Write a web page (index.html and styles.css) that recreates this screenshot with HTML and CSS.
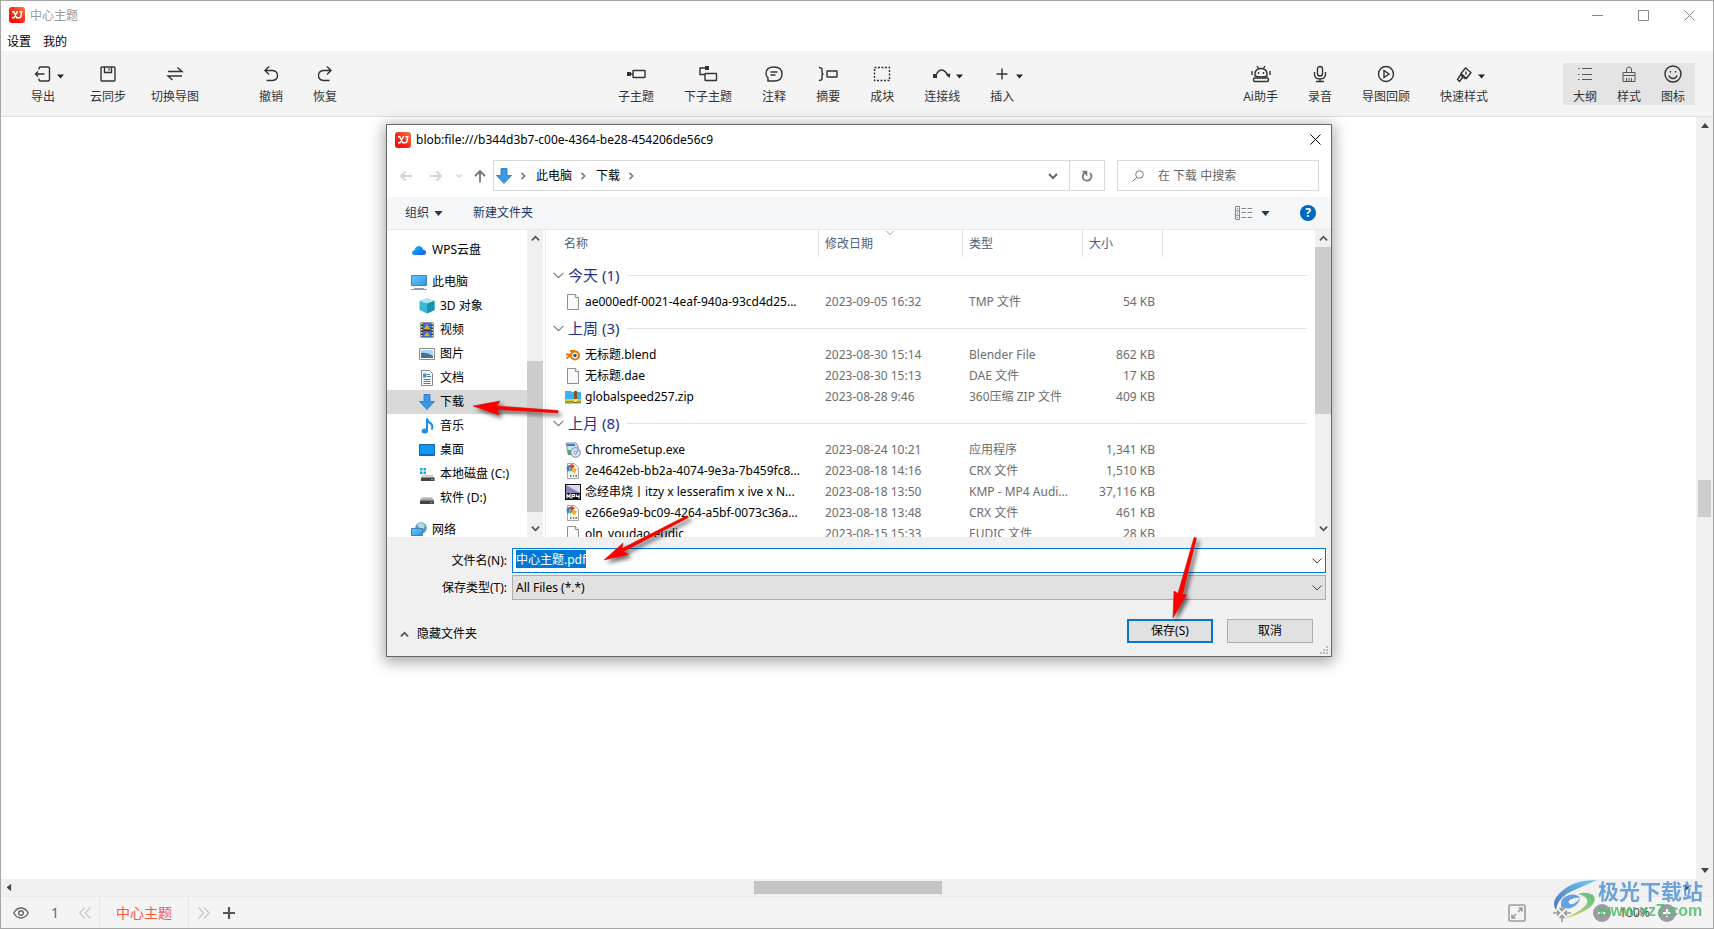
FILE: index.html
```html
<!DOCTYPE html>
<html lang="zh-CN">
<head>
<meta charset="utf-8">
<title>中心主题</title>
<link rel="stylesheet" href="styles.css">
</head>
<body>
<svg class="defs" aria-hidden="true">
  <defs>
    <linearGradient id="gLogo" x1="0" y1="1" x2="1" y2="0"><stop offset="0" stop-color="#f00"/><stop offset=".5" stop-color="#f3301c"/><stop offset="1" stop-color="#f47a45"/></linearGradient>
    <linearGradient id="gScreen" x1="0" y1="0" x2="1" y2="1"><stop offset="0" stop-color="#6cc8fb"/><stop offset="1" stop-color="#2a96ea"/></linearGradient>
    <linearGradient id="gCloud" x1="0" y1="0" x2="1" y2="1"><stop offset="0" stop-color="#1fd0e0"/><stop offset=".5" stop-color="#1687f5"/><stop offset="1" stop-color="#1a5cf0"/></linearGradient>
    <linearGradient id="gDisk" x1="0" y1="0" x2="0" y2="1"><stop offset="0" stop-color="#d8d8d8"/><stop offset="1" stop-color="#8f8f8f"/></linearGradient>
    <linearGradient id="gSwirl" x1="0" y1="1" x2="1" y2="0"><stop offset="0" stop-color="#2e62b8"/><stop offset="1" stop-color="#5cc4ee"/></linearGradient>
    <linearGradient id="gLeaf" x1="0" y1="1" x2="1" y2="0"><stop offset="0" stop-color="#e9d85a"/><stop offset="1" stop-color="#3fb56c"/></linearGradient>
    <filter id="soft" x="-30%" y="-50%" width="160%" height="200%"><feDropShadow dx="3" dy="3" stdDeviation="2" flood-color="#000" flood-opacity=".6"/></filter>
  </defs>
  <symbol id="logo" viewBox="0 0 16 16"><rect width="16" height="16" rx="3" fill="url(#gLogo)"/><path d="M3 4.800h1.800l3 6h2.400q1.600 0 1.800-1.600l.6-4.400h-2.200M8.600 4.200L5 10.800H3" fill="none" stroke="#fff" stroke-width="1.500"/></symbol>
  <symbol id="dl" viewBox="0 0 16 16"><path d="M5 .5h6v7h4.500L8 15.500.5 7.500H5z" fill="#3b96e6" stroke="#2277c8" stroke-width=".8"/></symbol>
  <symbol id="file" viewBox="0 0 16 16"><path d="M2.500.5h8l3 3v12h-11z" fill="#f9f9f9" stroke="#8e8e8e"/><path d="M10.500.5v3h3" fill="#fff" stroke="#8e8e8e"/></symbol>
  <symbol id="crx" viewBox="0 0 16 16"><path d="M2.500.5h7l4 4v11h-11z" fill="#f7f7f7" stroke="#a5a5a5"/><path d="M3 3l4-2 3 2-3 3z" fill="#e33b2e"/><path d="M1.500 4l3-2v5l-2 2z" fill="#2f78d0"/><path d="M4 9l2-5 2 3z" fill="#36a64a"/><path d="M8 5l4 1-2 4-3-1z" fill="#f5b31d"/><path d="M5 13h1.500M8 13h1.200M10.500 13H12" stroke="#777" stroke-width="2"/></symbol>
  <symbol id="chev" viewBox="0 0 12 12"><path d="M1.500 3.500L6 8l4.500-4.500" fill="none" stroke="currentColor"/></symbol>
  <symbol id="chevb" viewBox="0 0 10 10"><path d="M1 3l4 4 4-4" fill="none" stroke="currentColor" stroke-width="2"/></symbol>
  <symbol id="tri" viewBox="0 0 10 6"><path d="M0 0h10L5 6z" fill="currentColor"/></symbol>
</svg>

<div class="app">
  <header class="titlebar">
    <svg class="i16"><use href="#logo"/></svg>
    <h1 class="app-name">中心主题</h1>
    <div class="win-buttons">
      <button aria-label="最小化"><svg viewBox="0 0 11 11"><path d="M0 5.500h11"/></svg></button>
      <button aria-label="最大化"><svg viewBox="0 0 11 11"><path d="M.5.500h10v10H.5z"/></svg></button>
      <button aria-label="关闭"><svg viewBox="0 0 11 11"><path d="M.5.500l10 10M10.500.500l-10 10"/></svg></button>
    </div>
  </header>
  <nav class="menubar"><button>设置</button><button>我的</button></nav>

  <div class="toolbar">
    <div class="tools tools-left">
      <button class="tool tool-export"><svg viewBox="0 0 18 18"><path d="M5 4.500V3.500Q5 2 6.500 2H14q1.500 0 1.500 1.500v11Q15.500 16 14 16H6.500Q5 16 5 14.500v-1M1.500 9h9M4 6.500L1.500 9 4 11.500"/></svg><span>导出</span><svg class="caret"><use href="#tri"/></svg></button>
      <button class="tool"><svg viewBox="0 0 18 18"><rect x="2" y="2" width="14" height="14" rx="1"/><path d="M5.500 2v5.500h7V2M10 3.500v2"/></svg><span>云同步</span></button>
      <button class="tool"><svg viewBox="0 0 18 18"><path d="M2 6.500h14L11.500 2.500M16 11H2l4.500 4"/></svg><span>切换导图</span></button>
      <button class="tool tool-undo"><svg viewBox="0 0 18 18"><path d="M3 5.500h7.500q5 .5 5 5t-5 5H4.500M7 1.500l-4 4 4 4"/></svg><span>撤销</span></button>
      <button class="tool tool-redo"><svg viewBox="0 0 18 18"><path d="M15 5.500H7.500q-5 .5-5 5t5 5h6M11 1.500l4 4-4 4"/></svg><span>恢复</span></button>
    </div>
    <div class="tools tools-mid">
      <button class="tool"><svg viewBox="0 0 18 18"><path d="M0 7h4v4H0z" class="f"/><path d="M3 9h3"/><rect x="6" y="5.500" width="12" height="7" rx=".5"/></svg><span>子主题</span></button>
      <button class="tool"><svg viewBox="0 0 18 18"><path d="M6 9.500H1V3h6"/><path d="M6 1h4v4H6z" class="f"/><rect x="6" y="8.500" width="11.500" height="7" rx=".5"/></svg><span>下子主题</span></button>
      <button class="tool"><svg viewBox="0 0 18 18"><path d="M3 16V13Q1 11 1 8.500 1 2 9 2t8 7-8 7zM5.500 7h7M5.500 10h5"/></svg><span>注释</span></button>
      <button class="tool"><svg viewBox="0 0 18 18"><path d="M0 2.500q3 0 3 2v2.500q0 2 1.500 2-1.500 0-1.500 2v2.500q0 2-3 2"/><rect x="8" y="6" width="10" height="6" rx=".5"/></svg><span>摘要</span></button>
      <button class="tool"><svg viewBox="0 0 18 18"><rect x="1.500" y="2.500" width="15" height="13" stroke-dasharray="2 1.500"/></svg><span>成块</span></button>
      <button class="tool"><svg viewBox="0 0 18 18"><path d="M3 10q5-10 12 0"/><path d="M0 9h4v4H0zM12.500 9.500l5-1-1 4.500z" class="f"/></svg><span>连接线</span><svg class="caret"><use href="#tri"/></svg></button>
      <button class="tool"><svg viewBox="0 0 18 18"><path d="M9 3.500v11M3.500 9h11"/></svg><span>插入</span><svg class="caret"><use href="#tri"/></svg></button>
    </div>
    <div class="tools tools-mid tools-right">
      <button class="tool"><svg viewBox="0 0 20 18"><path d="M4 11V8q1-4.500 6-4.500T16 8v3q-2 1-6 1t-6-1zM6 1l1.500 2.500M14 1l-1.500 2.500M1 6v4M19 6v4M7.500 7v2M12.500 7v2"/><rect x="2.500" y="13" width="15" height="3.500" rx="1.500"/></svg><span>Ai助手</span></button>
      <button class="tool"><svg viewBox="0 0 18 18"><rect x="6.500" y="1.500" width="5" height="9.500" rx="2.500"/><path d="M3.500 7v2q0 5 5.500 5t5.500-5V7M9 14v2.500M5 16.500h8"/></svg><span>录音</span></button>
      <button class="tool"><svg viewBox="0 0 18 18"><circle cx="9" cy="9" r="7.500"/><path d="M7 5.500v7L12 9z"/></svg><span>导图回顾</span></button>
      <button class="tool"><svg viewBox="0 0 18 18"><path d="M6 8.500L10.500 3l5.500 4.500-4.500 6zM5 9.500l5.500 4.500M5.500 10L2.500 14.500l2 2 3-4M11 6.500v3"/></svg><span>快速样式</span><svg class="caret"><use href="#tri"/></svg></button>
    </div>
    <div class="panel-tabs">
      <button class="tool"><svg viewBox="0 0 18 18" class="thin"><path d="M6 3.500h10M6 9.500h10M6 14.500h10M2 3.500h1.500M2 9.500h1.500M2 14.500h1.500"/></svg><span>大纲</span></button>
      <button class="tool"><svg viewBox="0 0 18 18" class="thin"><path d="M6.500 7.500V4Q7 2 9 2t2.500 2v3.500M3 7.500h12v3H3zM3 10.500v6h12v-6M6.500 13v3.500M9 13v3.500M11.500 13v3.500"/></svg><span>样式</span></button>
      <button class="tool"><svg viewBox="0 0 18 18"><circle cx="9" cy="9" r="8"/><path d="M5 10.500q1 3 4 3t4-3M6.500 6v1.500M11.500 6v1.500"/></svg><span>图标</span></button>
    </div>
  </div>

  <main class="workspace">
    <div class="canvas"></div>
    <div class="vscroll app-scroll"><svg class="arr up"><use href="#tri"/></svg><i class="thumb"></i><svg class="arr"><use href="#tri"/></svg></div>
  </main>
  <div class="hscroll"><svg class="arr left"><use href="#tri"/></svg><i class="thumb"></i><svg class="arr right"><use href="#tri"/></svg></div>
  <footer class="status">
    <button class="eye" aria-label="预览"><svg viewBox="0 0 16 12"><path d="M.8 6Q3.500 1 8 1t7.200 5Q12.500 11 8 11T.8 6z"/><circle cx="8" cy="6" r="2.300"/></svg></button>
    <span class="page">1</span>
    <button class="step" aria-label="上一页"><svg viewBox="0 0 12 12"><path d="M6 .5L.8 6 6 11.500M11.500.5L6.300 6l5.200 5.500"/></svg></button>
    <button class="tab">中心主题</button>
    <button class="step" aria-label="下一页"><svg viewBox="0 0 12 12"><path d="M6 .5L11.200 6 6 11.500M.5.500L5.700 6 .5 11.500"/></svg></button>
    <button class="add" aria-label="添加"><svg viewBox="0 0 12 12"><path d="M6 0v12M0 6h12"/></svg></button>
    <div class="zoom">
      <button aria-label="全屏"><svg viewBox="0 0 18 18" width="18" height="18"><rect x="1" y="1" width="16" height="16" rx="1"/><path d="M10.500 4H14v3.500M14 4l-4 4M4 10.500V14h3.500M4 14l4-4"/></svg></button>
      <button class="fit" aria-label="居中"><svg viewBox="0 0 18 18" width="18" height="18"><path d="M0 9h6M18 9h-6M9 0v6M9 18v-6M4 6.500L6.500 9 4 11.500M14 6.500L11.500 9l2.500 2.500M6.500 4L9 6.500 11.500 4M6.500 14L9 11.500l2.500 2.500"/></svg></button>
      <button aria-label="缩小"><svg viewBox="0 0 18 18" width="18" height="18"><circle cx="9" cy="9" r="9" class="disc"/><path d="M5 9h8" class="w"/></svg></button>
      <span class="percent">100%</span>
      <button aria-label="放大"><svg viewBox="0 0 18 18" width="18" height="18"><circle cx="9" cy="9" r="9" class="disc"/><path d="M5 9h8M9 5v8" class="w"/></svg></button>
    </div>
  </footer>

  <div class="watermark">
    <svg viewBox="0 0 44 42"><path d="M43 1Q20 1 8 12-4 22 2 31 3 21 14 14 27 8 43 1z" fill="url(#gSwirl)"/><path d="M26 19q-3-5-11-3-9 3-8 9 2 6 10 4 8-3 9-10-5 7-10 6-3-2 0-4 4-3 10-2z" fill="#4a94dc"/><path d="M24 15q8-3 15 1 5 6-4 13-9 7-29 12 18-7 25-14 7-8-7-12z" fill="url(#gLeaf)"/></svg>
    <div class="wm-text"><span class="wm-cn">极光下载站</span><span class="wm-url">www.xz7.com</span></div>
  </div>

  <section class="dialog" role="dialog" aria-label="另存为">
    <div class="dlg-title">
      <svg class="i16"><use href="#logo"/></svg>
      <span>blob:file:///b344d3b7-c00e-4364-be28-454206de56c9</span>
      <button class="dlg-close" aria-label="关闭"><svg viewBox="0 0 11 11"><path d="M.5.500l10 10M10.500.500l-10 10"/></svg></button>
    </div>
    <div class="dlg-nav">
      <div class="history">
        <button class="off" aria-label="后退"><svg viewBox="0 0 14 12"><path d="M13 6H2M6.500 1.500L2 6l4.500 4.500"/></svg></button>
        <button class="off" aria-label="前进"><svg viewBox="0 0 14 12"><path d="M1 6h11M7.500 1.500L12 6l-4.500 4.500"/></svg></button>
        <button class="off recent" aria-label="最近"><svg viewBox="0 0 8 8"><path d="M1.500 2.500L4 5l2.500-2.500"/></svg></button>
        <button class="upbtn" aria-label="上移"><svg viewBox="0 0 14 14"><path d="M7 13.500V2M2 7l5-5 5 5"/></svg></button>
      </div>
      <div class="address">
        <svg class="i16"><use href="#dl"/></svg>
        <svg class="sep"><use href="#chevb"/></svg><a href="#">此电脑</a>
        <svg class="sep"><use href="#chevb"/></svg><a href="#">下载</a>
        <svg class="sep"><use href="#chevb"/></svg>
        <svg class="drop"><use href="#chevb"/></svg>
        <button class="refresh" aria-label="刷新"><svg viewBox="0 0 12 12"><path d="M8.800 2.800Q10.800 4.500 10.300 7 9.500 10.500 6 10.700 2 10.500 1.700 7 1.600 4.200 4.500 2.500M1.500 1.700h4v4" stroke-width="1.700"/></svg></button>
      </div>
      <label class="search"><svg viewBox="0 0 12 12"><circle cx="7.500" cy="4.500" r="3.800"/><path d="M4.800 7.200L.5 11.500"/></svg><input type="text" placeholder="在 下载 中搜索" aria-label="搜索"></label>
    </div>
    <div class="dlg-cmd">
      <button>组织 <svg class="dropdown"><use href="#tri"/></svg></button>
      <button>新建文件夹</button>
      <button class="view" aria-label="视图"><svg viewBox="0 0 17 14" width="17" height="14"><path d="M.5.500h4v13h-4zM.5 4.800h4M.5 9.200h4M6.500 2.500H11M12.500 2.500H17M6.500 6.500H11M12.500 6.500H17M6.500 11.500H11M12.500 11.500H17" fill="none" stroke="#858585"/><path d="M2 2h1v1H2z" fill="#36a64a"/><path d="M2 6.500h1v1H2z" fill="#27c"/><path d="M2 11h1v1H2z" fill="#e22"/></svg><svg class="dropdown"><use href="#tri"/></svg></button>
      <button class="help" aria-label="帮助">?</button>
    </div>
    <div class="dlg-body">
      <ul class="tree">
        <li class="root"><svg viewBox="0 0 16 16"><path d="M4 13Q1 13 1 10.500 1 8.500 3.500 8 4.500 4 8 4q3 0 4 3.500 3 .5 3 3T12 13z" fill="url(#gCloud)"/></svg>WPS云盘</li>
        <li class="root gap"><svg viewBox="0 0 16 16"><path d="M.5 1.500h15v10H.5z" fill="url(#gScreen)" stroke="#3f83b8"/><path d="M3 14.500h10M0 15.500h16" stroke="#8aa0b2"/></svg>此电脑</li>
        <li><svg viewBox="0 0 16 16"><path d="M8 .5L15.500 3v9L8 15.500.5 12V3z" fill="#38b8d4"/><path d="M8 .5L15.500 3 8 5.500.5 3z" fill="#a9ebf3"/><path d="M8 5.500v10L15.500 12V3z" fill="#1592b4"/></svg>3D 对象</li>
        <li><svg viewBox="0 0 16 16"><path d="M1.500.5h13v15h-13z" fill="#333"/><path d="M4 1h8v7H4zM4 9h8v6H4z" fill="#2e6fd0"/><path d="M5 7l3-5 3 5zM5 14l3-4 3 4z" fill="#e6a62a"/><path d="M2.800 1v14M13.200 1v14" stroke="#fff" stroke-width="1.300" stroke-dasharray="1.500 1.500"/></svg>视频</li>
        <li><svg viewBox="0 0 16 16"><path d="M.5 2.500h15v11H.5z" fill="#fff" stroke="#8b8b8b"/><path d="M2 4h12v8H2z" fill="#a8d8f2"/><path d="M2 7q5-1 12 3v2H2z" fill="#49718c"/></svg>图片</li>
        <li><svg viewBox="0 0 16 16"><path d="M2.500.5h8l3 3v12h-11z" fill="#fff" stroke="#888"/><path d="M8 4.500h3M8 6.500h4M4.500 9.500h7M4.500 11.500h7M4.500 13.500h7" stroke="#3c7fb8"/><path d="M4 3.500h3.500v4H4z" fill="#2d97e5"/></svg>文档</li>
        <li class="on"><svg><use href="#dl"/></svg>下载</li>
        <li><svg viewBox="0 0 16 16"><ellipse cx="5.800" cy="13" rx="3.200" ry="2.500" fill="#1791ee"/><path d="M8 13V.5q1 4 4 5 2.500 3 .5 6" fill="none" stroke="#1791ee" stroke-width="2"/></svg>音乐</li>
        <li><svg viewBox="0 0 16 16"><path d="M.5 2.500h15v11H.5z" fill="#1496f4" stroke="#1169a9"/><path d="M1 12.500h14" stroke="#0b6ec4"/></svg>桌面</li>
        <li><svg viewBox="0 0 16 16"><path d="M1 2h2.500v2.500H1zM4.500 2H7v2.500H4.500zM1 5.500h2.500V8H1zM4.500 5.500H7V8H4.500z" fill="#18a8ea"/><path d="M3 9h11l1.500 2.500h-13z" fill="#d0d0d0"/><path d="M2 11.500h13.500v3.500H2z" fill="#444"/><path d="M12 13.500h2" stroke="#4be05a"/></svg>本地磁盘 (C:)</li>
        <li><svg viewBox="0 0 16 16"><path d="M3 7h10l2 3.500H1z" fill="url(#gDisk)"/><path d="M1 10.500h14V14H1z" fill="#444"/><path d="M11.500 12.500h2" stroke="#4be05a"/></svg>软件 (D:)</li>
        <li class="root gap"><svg viewBox="0 0 16 16"><circle cx="10" cy="6" r="5.800" fill="#5b98bd"/><path d="M6 3q5-5 8 1l-3 5z" fill="#b2d9ea"/><path d="M.5 6.500h11v7H.5z" fill="url(#gScreen)" stroke="#3983b5"/></svg>网络</li>
      </ul>
      <div class="vscroll tree-scroll"><svg class="arr up"><use href="#chevb"/></svg><i class="thumb"></i><svg class="arr"><use href="#chevb"/></svg></div>
      <div class="files">
        <svg class="sort"><use href="#chev"/></svg>
        <table>
          <colgroup><col class="c-name"><col class="c-date"><col class="c-type"><col class="c-size"><col></colgroup>
          <thead><tr><th>名称</th><th>修改日期</th><th>类型</th><th>大小</th><td></td></tr></thead>
          <tbody>
            <tr class="group"><th colspan="5"><div><svg><use href="#chev"/></svg>今天 (1)</div></th></tr>
            <tr><td><svg><use href="#file"/></svg>ae000edf-0021-4eaf-940a-93cd4d25...</td><td>2023-09-05 16:32</td><td>TMP 文件</td><td>54 KB</td><td></td></tr>
            <tr class="group"><th colspan="5"><div><svg><use href="#chev"/></svg>上周 (3)</div></th></tr>
            <tr><td><svg viewBox="0 0 16 16"><path d="M1 7.500h7M1.500 11.500L9 5.500M5 4h5" stroke="#ea7600" stroke-width="1.800"/><circle cx="10" cy="8.500" r="4" fill="#fff" stroke="#ea7600" stroke-width="2.200"/><circle cx="10" cy="8.500" r="1.800" fill="#265787"/></svg>无标题.blend</td><td>2023-08-30 15:14</td><td>Blender File</td><td>862 KB</td><td></td></tr>
            <tr><td><svg><use href="#file"/></svg>无标题.dae</td><td>2023-08-30 15:13</td><td>DAE 文件</td><td>17 KB</td><td></td></tr>
            <tr><td><svg viewBox="0 0 16 16"><path d="M0 2h6l1 1h9v11H0z" fill="#38b2f2"/><path d="M0 10h16v2H0z" fill="#fbbf24"/><path d="M0 12h16v2.500H0z" fill="#5cba47"/><path d="M9 2h3v12H9z" fill="#8b4f1d"/><path d="M9 10h3v3H9z" fill="#ffe08a"/></svg>globalspeed257.zip</td><td>2023-08-28 9:46</td><td>360压缩 ZIP 文件</td><td>409 KB</td><td></td></tr>
            <tr class="group"><th colspan="5"><div><svg><use href="#chev"/></svg>上月 (8)</div></th></tr>
            <tr><td><svg viewBox="0 0 16 16"><path d="M1 1h10l2 3v8H3z" fill="#cfe0ee" stroke="#7d99b5"/><path d="M2 2h8v2H2z" fill="#3f7dc0"/><path d="M3 8h4v5H3z" fill="#52a85a"/><circle cx="10.500" cy="10.500" r="4.800" fill="#dfe6f7" stroke="#6d83ae"/><circle cx="10.500" cy="10.500" r="1.500" fill="#fff" stroke="#6d83ae"/><path d="M12 7l2 2-2 1z" fill="#9c7fe0"/></svg>ChromeSetup.exe</td><td>2023-08-24 10:21</td><td>应用程序</td><td>1,341 KB</td><td></td></tr>
            <tr><td><svg><use href="#crx"/></svg>2e4642eb-bb2a-4074-9e3a-7b459fc8...</td><td>2023-08-18 14:16</td><td>CRX 文件</td><td>1,510 KB</td><td></td></tr>
            <tr><td><svg viewBox="0 0 16 16"><path d="M0 0h16v16H0z" fill="#111"/><path d="M1 1h14v8H1z" fill="#8b83b5"/><path d="M1 1l14 8V1z" fill="#dcd8f0"/><path d="M2 14.500v-4l1.500 2 1.500-2v4M7 14.500v-4h2.500v2H7M11.500 10.500v2H14M14 10.500v4" fill="none" stroke="#fff" stroke-width="1.200"/></svg>念经串烧丨itzy x lesserafim x ive x N...</td><td>2023-08-18 13:50</td><td>KMP - MP4 Audi...</td><td>37,116 KB</td><td></td></tr>
            <tr><td><svg><use href="#crx"/></svg>e266e9a9-bc09-4264-a5bf-0073c36a...</td><td>2023-08-18 13:48</td><td>CRX 文件</td><td>461 KB</td><td></td></tr>
            <tr><td><svg><use href="#file"/></svg>oln_youdao.eudic</td><td>2023-08-15 15:33</td><td>EUDIC 文件</td><td>28 KB</td><td></td></tr>
          </tbody>
        </table>
      </div>
      <div class="vscroll file-scroll"><svg class="arr up"><use href="#chevb"/></svg><i class="thumb"></i><svg class="arr"><use href="#chevb"/></svg></div>
    </div>
    <form class="dlg-form">
      <label for="fname">文件名(N):</label>
      <div class="field"><input id="fname" type="text" value="中心主题.pdf"><svg><use href="#chev"/></svg></div>
      <label for="ftype">保存类型(T):</label>
      <div class="field"><select id="ftype"><option>All Files (*.*)</option></select><svg><use href="#chev"/></svg></div>
    </form>
    <div class="dlg-foot">
      <button class="hide"><svg><use href="#chevb"/></svg>隐藏文件夹</button>
      <button class="btn primary">保存(S)</button>
      <button class="btn">取消</button>
      <svg class="grip" viewBox="0 0 8 8"><path d="M6 0h2v2H6zM3 3h2v2H3zM6 3h2v2H6zM0 6h2v2H0zM3 6h2v2H3zM6 6h2v2H6z" fill="#bbb"/></svg>
    </div>
    <svg class="pointers" viewBox="0 0 944 531" aria-hidden="true">
      <g filter="url(#soft)" fill="#f00" stroke="#d00000" stroke-width=".5">
        <path d="M86 281l27-5-3 5 61 4.500v2.500l-61-3.500 2 5.500z"/>
        <path d="M217 435l19-17-1 5.500 65-33 1.500 2-65 34 5 3z"/>
        <path d="M786 493l1-27 4 2.500 16-56 2.500.5-14 57 4-.5z"/>
      </g>
    </svg>
  </section>
</div>
<script src="main.js"></script>
</body>
</html>
```

FILE: styles.css
```css
* { box-sizing: border-box; }
html, body { height: 100%; margin: 0; }
body { font: 12px/16px "Noto Sans", "Noto Sans CJK SC", sans-serif; color: #000; background: #fff; overflow: hidden; }
button { font: inherit; color: inherit; background: none; border: 0; padding: 0; }
svg { display: block; flex: none; }
.defs { position: absolute; width: 0; height: 0; }
.i16 { width: 16px; height: 16px; }

.app { position: relative; height: 100vh; display: flex; flex-direction: column; border: 1px solid #a6a6a6; }
.titlebar { display: flex; align-items: center; height: 28px; padding-left: 8px; gap: 5px; }
.app-name { margin: 0; padding-top: 1px; font: inherit; color: #999; }
.win-buttons { display: flex; margin-left: auto; padding-right: 1px; }
.win-buttons button { width: 46px; height: 28px; display: grid; place-items: center; }
.win-buttons svg, .dlg-close svg { width: 11px; height: 11px; fill: none; stroke: #888; }
.menubar { display: flex; gap: 12px; height: 22px; padding: 5px 6px 0; }
.menubar button { height: 16px; }

.toolbar { flex: none; display: flex; align-items: flex-start; height: 66px; padding: 12px 18px 0 30px; background: #f4f4f4; border-bottom: 1px solid #dedede; color: #333; }
.tools { display: flex; }
.tools-left { gap: 25px; padding-right: 52px; }
.tools-mid { gap: 30px; margin-left: auto; }
.tool-export { margin-right: 10px; }
.tool-undo { margin-left: 35px; }
.tool-redo { margin-left: 5px; }
.tool { position: relative; display: flex; flex-direction: column; align-items: center; gap: 6px; white-space: nowrap; }
.tool svg { height: 18px; width: 20px; fill: none; stroke: #333; stroke-width: 1.4; margin-top: 2px; }
.tool .f { fill: #333; stroke: none; }
.tool svg.thin { stroke-width: 1; stroke: #555; }
.tool svg.caret { position: absolute; left: calc(50% + 14px); top: 11px; width: 7px; height: 5px; margin: 0; stroke: none; color: #222; }
.panel-tabs { display: flex; margin-left: 75px; height: 42px; background: #e4e4e4; }
.panel-tabs .tool { width: 44px; }

.workspace { flex: 1; display: flex; min-height: 0; }
.canvas { flex: 1; background: #fff; }
.vscroll { display: grid; justify-items: center; background: #f0f0f0; width: 17px; }
.vscroll .thumb { width: 100%; background: #cdcdcd; }
.arr { width: 8px; height: 5px; align-self: center; color: #444; }
.up { transform: rotate(180deg); }
.app-scroll { grid-template-rows: 17px 1fr 17px; }
.app-scroll .thumb { height: 37px; width: 13px; align-self: center; }
.hscroll { flex: none; display: flex; align-items: center; justify-content: space-between; height: 17px; padding: 0 22px 0 4px; background: #f0f0f0; }
.hscroll .thumb { width: 188px; height: 13px; background: #c4c4c4; }
.left { transform: rotate(90deg); }
.right { transform: rotate(-90deg); }

.status { flex: none; display: flex; align-items: center; height: 32px; padding: 0 37px 0 12px; background: #f4f4f4; border-top: 1px solid #e8e8e8; color: #666; }
.status svg { fill: none; stroke: #666; stroke-width: 1.4; }
.eye svg { width: 16px; height: 12px; }
.page { width: 50px; padding-left: 2px; text-align: center; font-size: 14px; }
.step svg { width: 12px; height: 12px; stroke: #ccc; }
.tab { width: 90px; height: 31px; margin: 0 9px 0 8px; border: solid #e8e8e8; border-width: 0 1px; color: #fa5a3c; font-size: 14px; }
.add { margin-left: 13px; }
.add svg { width: 12px; height: 12px; stroke-width: 2.2; stroke: #555; }
.zoom { display: flex; align-items: center; margin-left: auto; }
.zoom svg { stroke: #999ca3; stroke-width: 1.600; }
.zoom .fit { margin: 0 22px 0 27px; }
.zoom .disc { fill: #999ca3; stroke: none; }
.zoom .w { stroke: #fff; stroke-width: 2; }
.percent { width: 47px; text-align: center; color: #444; }

.watermark { position: absolute; right: 10px; bottom: 7px; display: flex; align-items: center; opacity: .85; }
.watermark svg { width: 44px; height: 42px; }
.wm-text { display: flex; flex-direction: column; }
.wm-cn { font: bold 21px/22px "Noto Sans CJK SC", sans-serif; color: #5596d6; }
.wm-url { font: bold 16px/20px "Liberation Sans", sans-serif; color: #4fc06b; }

.dialog { position: absolute; left: 385px; top: 123px; width: 946px; display: flex; flex-direction: column; background: #fff; border: 1px solid #666; box-shadow: 0 3px 14px 2px rgba(0, 0, 0, .35); }
.dlg-title { display: flex; align-items: center; height: 29px; padding-left: 8px; gap: 5px; }
.dlg-close { width: 32px; height: 29px; margin-left: auto; display: grid; place-items: center; }
.dlg-close svg { stroke: #000; }
.dlg-nav { display: flex; align-items: center; height: 43px; padding-right: 12px; }
.history { display: flex; align-items: center; width: 106px; padding-left: 12px; }
.history svg { width: 14px; height: 12px; fill: none; stroke: #777; stroke-width: 1.8; }
.history .off svg { stroke: #d4d4d4; }
.history .off + .off { margin-left: 16px; }
.history .recent svg { width: 8px; height: 8px; stroke-width: 1.500; }
.history .off + .recent { margin-left: 12px; }
.history .upbtn { margin-left: 10px; }
.history .upbtn svg { height: 14px; }
.address { flex: 1; display: flex; align-items: center; height: 31px; padding-left: 2px; border: 1px solid #d9d9d9; }
.address a { color: #000; text-decoration: none; }
.sep { width: 8px; height: 8px; margin: 0 9px 0 7px; transform: rotate(-90deg); color: #777; }
.drop { width: 10px; height: 10px; margin: 0 11px 0 auto; color: #666; }
.refresh { align-self: stretch; width: 35px; display: grid; place-items: center; border-left: 1px solid #d9d9d9; }
.refresh svg, .search svg { width: 12px; height: 12px; fill: none; stroke: #777; }
.search { display: flex; align-items: center; width: 202px; height: 31px; margin-left: 12px; padding-left: 14px; gap: 14px; border: 1px solid #d9d9d9; }
.search input { flex: 1; min-width: 0; border: 0; padding: 0; font: inherit; outline: 0; }
.search input::placeholder { color: #666; }
.dlg-cmd { display: flex; align-items: center; height: 33px; padding: 0 15px 0 18px; gap: 30px; background: #f5f6f8; border-bottom: 1px solid #e6e7e8; color: #1e395b; }
.dlg-cmd button { display: flex; align-items: center; gap: 5px; }
.dropdown { width: 9px; height: 5px; }
.dlg-cmd .view { margin-left: auto; gap: 9px; }
.dlg-cmd .help { justify-content: center; width: 16px; height: 16px; border-radius: 50%; background: #0067c5; color: #fff; font-weight: bold; }

.dlg-body { display: flex; height: 307px; }
.tree { width: 140px; margin: 0; padding: 8px 0 0; list-style: none; overflow: hidden; }
.tree li { display: flex; align-items: center; gap: 5px; height: 24px; padding-left: 32px; white-space: nowrap; }
.tree .root { padding-left: 24px; }
.tree .gap { margin-top: 8px; }
.tree .on { background: #d9d9d9; }
.tree svg { width: 16px; height: 16px; }
.dlg-body .vscroll { width: 16px; grid-template-rows: 17px 1fr 17px; }
.dlg-body .arr { width: 9px; height: 9px; color: #555; }
.tree-scroll .thumb { height: 151px; align-self: end; margin-bottom: 8px; }
.file-scroll .thumb { height: 167px; align-self: start; }
.files { position: relative; flex: 1; min-width: 0; margin-left: 2px; padding-right: 8px; overflow: hidden; border-left: 1px solid #ececec; }
.sort { position: absolute; left: 339px; top: -2px; width: 10px; height: 10px; color: #888; }
table { width: 100%; border-collapse: collapse; table-layout: fixed; color: #6d6d6d; }
.c-name { width: 273px; }
.c-date { width: 144px; }
.c-type { width: 120px; }
.c-size { width: 80px; }
th { text-align: left; font-weight: normal; }
thead tr { height: 29px; }
thead th { height: 29px; padding: 0 0 2px 6px; color: #4c607a; background: linear-gradient(#e2e2e2, #e2e2e2) right top / 1px 27px no-repeat; }
thead th:first-child { padding-left: 18px; }
tbody td { height: 21px; padding: 0 0 0 6px; line-height: 21px; white-space: nowrap; }
tbody td:first-child { display: flex; align-items: center; gap: 4px; padding-left: 19px; color: #000; }
tbody td:nth-child(4) { text-align: right; padding-right: 8px; }
tbody td svg { width: 16px; height: 16px; }
.group th { height: 32px; padding: 0; color: #1e3287; font-size: 15px; }
.group div { display: flex; align-items: center; gap: 3px; height: 32px; padding-left: 6px; }
.group div::after { content: ""; flex: 1; height: 1px; margin-left: 5px; background: #e2e2e2; }
.group svg { width: 13px; height: 13px; color: #777; }

.dlg-form { display: grid; grid-template-columns: 120px 1fr; column-gap: 5px; row-gap: 2px; align-items: center; padding: 11px 5px 0 0; background: #f0f0f0; }
.dlg-form label { text-align: right; }
.field { position: relative; }
.field input, .field select { display: block; width: 100%; height: 25px; padding: 0 20px 3px 3px; border: 1px solid #0078d7; border-radius: 0; outline: 0; font: inherit; color: #000; background: #fff; }
.field select { appearance: none; padding: 0 20px 0 3px; border-color: #adadad; background: #e1e1e1; }
.field svg { position: absolute; right: 3px; top: 7px; width: 12px; height: 12px; color: #444; }
#fname::selection { background: #0078d7; color: #fff; }
.dlg-foot { position: relative; display: flex; align-items: flex-start; height: 56px; padding: 19px 18px 0 13px; background: #f0f0f0; }
.hide { display: flex; align-items: center; gap: 8px; margin: 7px auto 0 0; }
.hide svg { width: 9px; height: 9px; transform: rotate(180deg); color: #555; }
.btn { width: 86px; height: 24px; margin-left: 14px; background: #e1e1e1; border: 1px solid #adadad; }
.primary { border: 2px solid #0078d7; }
.grip { position: absolute; right: 3px; bottom: 2px; width: 8px; height: 8px; }
.pointers { position: absolute; left: 0; top: 0; width: 944px; height: 531px; pointer-events: none; }
```

FILE: main.js
```js
// The suggested file name starts selected, ready to be overtyped.
const nameField = document.getElementById("fname");
nameField.focus();
nameField.select();
```
